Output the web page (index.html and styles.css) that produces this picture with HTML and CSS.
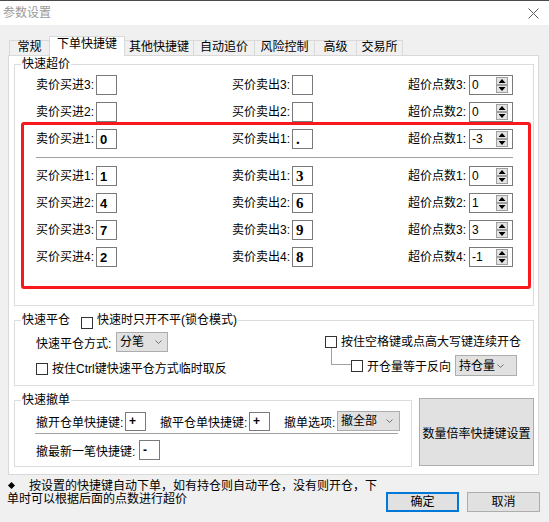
FILE: index.html
```html
<!DOCTYPE html>
<html lang="zh-CN">
<head>
<meta charset="utf-8">
<title>参数设置</title>
<link rel="stylesheet" href="styles.css">
</head>
<body>
<div class="window">
  <header class="titlebar">
    <span class="title">参数设置</span>
    <svg class="close" width="11" height="11" viewBox="0 0 11 11"><path d="M0.5 0.5L10.5 10.5M10.5 0.5L0.5 10.5" stroke="#5c5c5c" stroke-width="1" fill="none"/></svg>
  </header>
  <div class="client">
    <nav class="tabs">
      <div class="tab w1">常规</div>
      <div class="tab active w2">下单快捷键</div>
      <div class="tab w3">其他快捷键</div>
      <div class="tab w4">自动追价</div>
      <div class="tab w5">风险控制</div>
      <div class="tab w6">高级</div>
      <div class="tab w7">交易所</div>
    </nav>
    <div class="panel">
      <fieldset class="group">
        <legend class="legend">快速超价</legend>
        <div class="rows">
          <div class="row">
            <div class="cell"><span class="lbl">卖价买进3:</span><span class="edit"></span></div>
            <div class="cell"><span class="lbl">买价卖出3:</span><span class="edit"></span></div>
            <div class="cell"><span class="lbl wide">超价点数3:</span><span class="spin"><span class="val">0</span><span class="spin-btns"><span class="sb up"></span><span class="sb down"></span></span></span></div>
          </div>
          <div class="row">
            <div class="cell"><span class="lbl">卖价买进2:</span><span class="edit"></span></div>
            <div class="cell"><span class="lbl">买价卖出2:</span><span class="edit"></span></div>
            <div class="cell"><span class="lbl wide">超价点数2:</span><span class="spin"><span class="val">0</span><span class="spin-btns"><span class="sb up"></span><span class="sb down"></span></span></span></div>
          </div>
          <div class="row">
            <div class="cell"><span class="lbl">卖价买进1:</span><span class="edit sans">0</span></div>
            <div class="cell"><span class="lbl">买价卖出1:</span><span class="edit serif">.</span></div>
            <div class="cell"><span class="lbl wide">超价点数1:</span><span class="spin"><span class="val">-3</span><span class="spin-btns"><span class="sb up"></span><span class="sb down"></span></span></span></div>
          </div>
          <div class="sep"></div>
          <div class="row">
            <div class="cell"><span class="lbl">买价买进1:</span><span class="edit sans">1</span></div>
            <div class="cell"><span class="lbl">卖价卖出1:</span><span class="edit serif">3</span></div>
            <div class="cell"><span class="lbl wide">超价点数1:</span><span class="spin"><span class="val">0</span><span class="spin-btns"><span class="sb up"></span><span class="sb down"></span></span></span></div>
          </div>
          <div class="row">
            <div class="cell"><span class="lbl">买价买进2:</span><span class="edit sans">4</span></div>
            <div class="cell"><span class="lbl">卖价卖出2:</span><span class="edit serif">6</span></div>
            <div class="cell"><span class="lbl wide">超价点数2:</span><span class="spin"><span class="val">1</span><span class="spin-btns"><span class="sb up"></span><span class="sb down"></span></span></span></div>
          </div>
          <div class="row">
            <div class="cell"><span class="lbl">买价买进3:</span><span class="edit sans">7</span></div>
            <div class="cell"><span class="lbl">卖价卖出3:</span><span class="edit serif">9</span></div>
            <div class="cell"><span class="lbl wide">超价点数3:</span><span class="spin"><span class="val">3</span><span class="spin-btns"><span class="sb up"></span><span class="sb down"></span></span></span></div>
          </div>
          <div class="row">
            <div class="cell"><span class="lbl">买价买进4:</span><span class="edit sans">2</span></div>
            <div class="cell"><span class="lbl">卖价卖出4:</span><span class="edit serif">8</span></div>
            <div class="cell"><span class="lbl wide">超价点数4:</span><span class="spin"><span class="val">-1</span><span class="spin-btns"><span class="sb up"></span><span class="sb down"></span></span></span></div>
          </div>
          <div class="highlight"></div>
        </div>
      </fieldset>

      <fieldset class="group g2">
        <legend class="legend legend-check"><span class="legend-title">快速平仓</span><span class="check legend-box"></span><span>快速时只开不平(锁仓模式)</span></legend>
        <div class="g2-body">
          <div class="g2-left">
            <div class="line l1"><span class="lbl-80">快速平仓方式:</span><span class="combo c52"><span>分笔</span><svg class="chev" width="7" height="4" viewBox="0 0 7 4"><polyline points="0.5,0.5 3.5,3.5 6.5,0.5" fill="none" stroke="#707070" stroke-width="1"/></svg></span></div>
            <div class="checkrow l2"><span class="check"></span><span>按住Ctrl键快速平仓方式临时取反</span></div>
          </div>
          <div class="g2-right">
            <div class="checkrow r1"><span class="check"></span><span>按住空格键或点高大写键连续开仓</span></div>
            <div class="line r2"><span class="tree"></span><span class="check"></span><span class="txt">开仓量等于反向</span><span class="combo c62"><span>持仓量</span><svg class="chev" width="7" height="4" viewBox="0 0 7 4"><polyline points="0.5,0.5 3.5,3.5 6.5,0.5" fill="none" stroke="#707070" stroke-width="1"/></svg></span></div>
          </div>
        </div>
      </fieldset>

      <div class="bottom-row">
        <fieldset class="group g3">
          <legend class="legend">快速撤单</legend>
          <div class="g3-body">
            <div class="line g3l1">
              <span class="lbl-89">撤开仓单快捷键:</span><span class="edit small plus">+</span>
              <span class="lbl-89 gap">撤平仓单快捷键:</span><span class="edit small plus">+</span>
              <span class="lbl-53 gap">撤单选项:</span><span class="combo c63"><span>撤全部</span><svg class="chev" width="7" height="4" viewBox="0 0 7 4"><polyline points="0.5,0.5 3.5,3.5 6.5,0.5" fill="none" stroke="#707070" stroke-width="1"/></svg></span>
            </div>
            <div class="sep2"></div>
            <div class="line g3l2"><span class="lbl-103">撤最新一笔快捷键:</span><span class="edit plus">-</span></div>
          </div>
        </fieldset>
        <button class="big-btn" type="button">数量倍率快捷键设置</button>
      </div>
    </div>

    <div class="footer">
      <p class="note"><span class="bullet"></span>按设置的快捷键自动下单，如有持仓则自动平仓，没有则开仓，下<br>单时可以根据后面的点数进行超价</p>
      <div class="buttons">
        <button class="btn primary" type="button">确定</button>
        <button class="btn" type="button">取消</button>
      </div>
    </div>
  </div>
</div>
</body>
</html>
```

FILE: styles.css
```css
* { box-sizing: border-box; }
html, body { margin: 0; padding: 0; }
body {
  width: 549px;
  height: 522px;
  overflow: hidden;
  background: #f0f0f0;
  font-family: "Liberation Sans", "Noto Sans CJK SC", sans-serif;
  font-size: 12px;
  color: #000;
}
.window {
  width: 549px;
  height: 522px;
  display: flex;
  flex-direction: column;
  background: #f0f0f0;
}

/* title bar */
.titlebar {
  height: 25px;
  flex: none;
  background: #fff;
  border-top: 1px solid #4a4a4a;
  display: flex;
  align-items: center;
  justify-content: space-between;
  padding: 0 10px 0 3px;
}
.title { color: #9a9a9a; line-height: 14px; }
.close { display: block; }

.client { flex: 1; padding-top: 11px; }

/* tabs */
.tabs {
  display: flex;
  align-items: flex-end;
  height: 19px;
  padding-left: 10px;
  position: relative;
  z-index: 1;
}
.tab {
  height: 15px;
  line-height: 13px;
  border: 1px solid #d9d9d9;
  border-bottom: none;
  background: #f0f0f0;
  text-align: center;
  margin-left: -1px;
  white-space: nowrap;
}
.tab.active {
  height: 20px;
  margin-bottom: -1px;
  padding-top: 1px;
  background: #fff;
}
.w1 { width: 41px; }
.w2 { width: 76px; }
.w3 { width: 70px; }
.w4 { width: 62px; }
.w5 { width: 61px; }
.w6 { width: 43px; }
.w7 { width: 47px; }

/* panel */
.panel {
  margin-left: 8px;
  width: 531px;
  height: 420px;
  background: #fff;
  border: 1px solid #d9d9d9;
  padding: 2px 4px 0 5px;
}

.group {
  margin: 0;
  padding: 0;
  min-width: 0;
  border: 1px solid #dcdcdc;
}
.legend {
  margin-left: 6px;
  padding: 0 1px;
  height: 13px;
  line-height: 13px;
  white-space: nowrap;
}

/* group 1 */
.rows {
  position: relative;
  display: flex;
  flex-direction: column;
  gap: 7px;
  padding: 4px 0 38px 21px;
}
.row {
  display: grid;
  grid-template-columns: 196px 176px 1fr;
  height: 20px;
}
.cell { display: flex; align-items: center; }
.lbl { width: 60px; white-space: nowrap; line-height: 14px; }
.lbl.wide { width: 61px; }
.edit {
  width: 21px;
  height: 20px;
  border: 1px solid #7a7a7a;
  background: #fff;
  padding-left: 3px;
  display: flex;
  align-items: center;
  flex: none;
}
.edit.sans { font-family: "Liberation Sans", sans-serif; font-weight: 700; font-size: 13px; }
.edit.serif { font-family: "Liberation Serif", serif; font-weight: 700; font-size: 15px; }
.edit.small { height: 19px; }
.edit.plus { font-family: "Liberation Sans", sans-serif; font-weight: 700; font-size: 12px; padding-left: 3px; }

.spin {
  width: 44px;
  height: 20px;
  border: 1px solid #7a7a7a;
  background: #fff;
  display: flex;
  align-items: center;
  padding: 0 4px 0 2px;
  flex: none;
}
.val { flex: 1; line-height: 14px; }
.spin-btns { width: 12px; display: flex; flex-direction: column; }
.sb {
  height: 8px;
  border: 1px solid #a0a0a0;
  background: #e3e3e3;
  display: flex;
  align-items: center;
  justify-content: center;
}
.sb::after {
  content: "";
  width: 7px;
  height: 4px;
  background: #000;
}
.sb.up::after { clip-path: polygon(50% 0, 100% 100%, 0 100%); }
.sb.down::after { clip-path: polygon(0 0, 100% 0, 50% 100%); }

.sep {
  width: 477px;
  height: 1px;
  background: #a0a0a0;
  margin: 1px 0;
}
.highlight {
  position: absolute;
  left: 6px;
  top: 51px;
  width: 510px;
  height: 167px;
  border: 3px solid #f8191c;
  border-radius: 3px;
  pointer-events: none;
}

/* shared controls */
.check {
  width: 12px;
  height: 12px;
  border: 1px solid #333;
  background: #fff;
  flex: none;
}
.checkrow {
  display: flex;
  align-items: center;
  gap: 4px;
  height: 12px;
  line-height: 14px;
  white-space: nowrap;
}
.line { display: flex; align-items: center; white-space: nowrap; }
.combo {
  display: flex;
  align-items: center;
  justify-content: space-between;
  height: 20px;
  border: 1px solid #adadad;
  background: #e1e1e1;
  padding: 0 5px 0 3px;
  flex: none;
  line-height: 14px;
}
.chev { display: block; }
.c52 { width: 52px; }
.c62 { width: 62px; height: 21px; padding-right: 12px; }
.c63 { width: 63px; padding-right: 6px; }

/* group 2 */
.g2 { margin-top: 8px; }
.legend-check { display: flex; align-items: flex-start; }
.legend-title { margin-right: 11px; }
.legend-box { margin: 3px 4px 0 0; }
.g2-body {
  display: grid;
  grid-template-columns: 289px 1fr;
  padding: 0 0 9px 21px;
}
.l1 { margin-top: 5px; height: 20px; }
.lbl-80 { width: 80px; }
.l2 { margin-top: 11px; }
.r1 { margin-top: 9px; }
.r2 { margin-top: 7px; height: 21px; }
.tree {
  align-self: flex-start;
  width: 20px;
  height: 17px;
  margin: -7px 0 0 6px;
  border-left: 1px solid #a0a0a0;
  border-bottom: 1px solid #a0a0a0;
  flex: none;
}
.r2 .txt { margin: 0 4px; }

/* group 3 + button */
.bottom-row {
  display: flex;
  align-items: flex-start;
  gap: 7px;
  margin-top: 8px;
}
.g3 { width: 398px; flex: none; }
.g3-body { padding: 4px 0 6px 21px; }
.g3l1 { height: 20px; }
.lbl-89 { width: 89px; }
.lbl-53 { width: 53px; }
.lbl-103 { width: 103px; }
.gap { margin-left: 14px; }
.sep2 {
  width: 363px;
  height: 1px;
  background: #a0a0a0;
  margin: 2px 0 0 -1px;
}
.g3l2 { margin-top: 6px; height: 20px; }

.big-btn {
  width: 115px;
  height: 68px;
  margin-top: 4px;
  padding: 0;
  border: 1px solid #adadad;
  background: #e1e1e1;
  font: inherit;
  color: #000;
  white-space: nowrap;
}

/* footer */
.footer {
  display: flex;
  padding: 5px 9px 0 7px;
}
.note {
  margin: 0;
  flex: 1;
  line-height: 13px;
  white-space: nowrap;
}
.bullet {
  display: inline-block;
  width: 5px;
  height: 5px;
  background: #000;
  transform: rotate(45deg);
  margin: 0 15px 0 2px;
  vertical-align: 2px;
}
.buttons {
  display: flex;
  gap: 8px;
  margin-top: 12px;
}
.btn {
  width: 73px;
  height: 20px;
  padding: 0;
  border: 1px solid #adadad;
  background: #e1e1e1;
  font: inherit;
  line-height: 16px;
  color: #000;
}
.btn.primary { border: 2px solid #0078d7; }
```
